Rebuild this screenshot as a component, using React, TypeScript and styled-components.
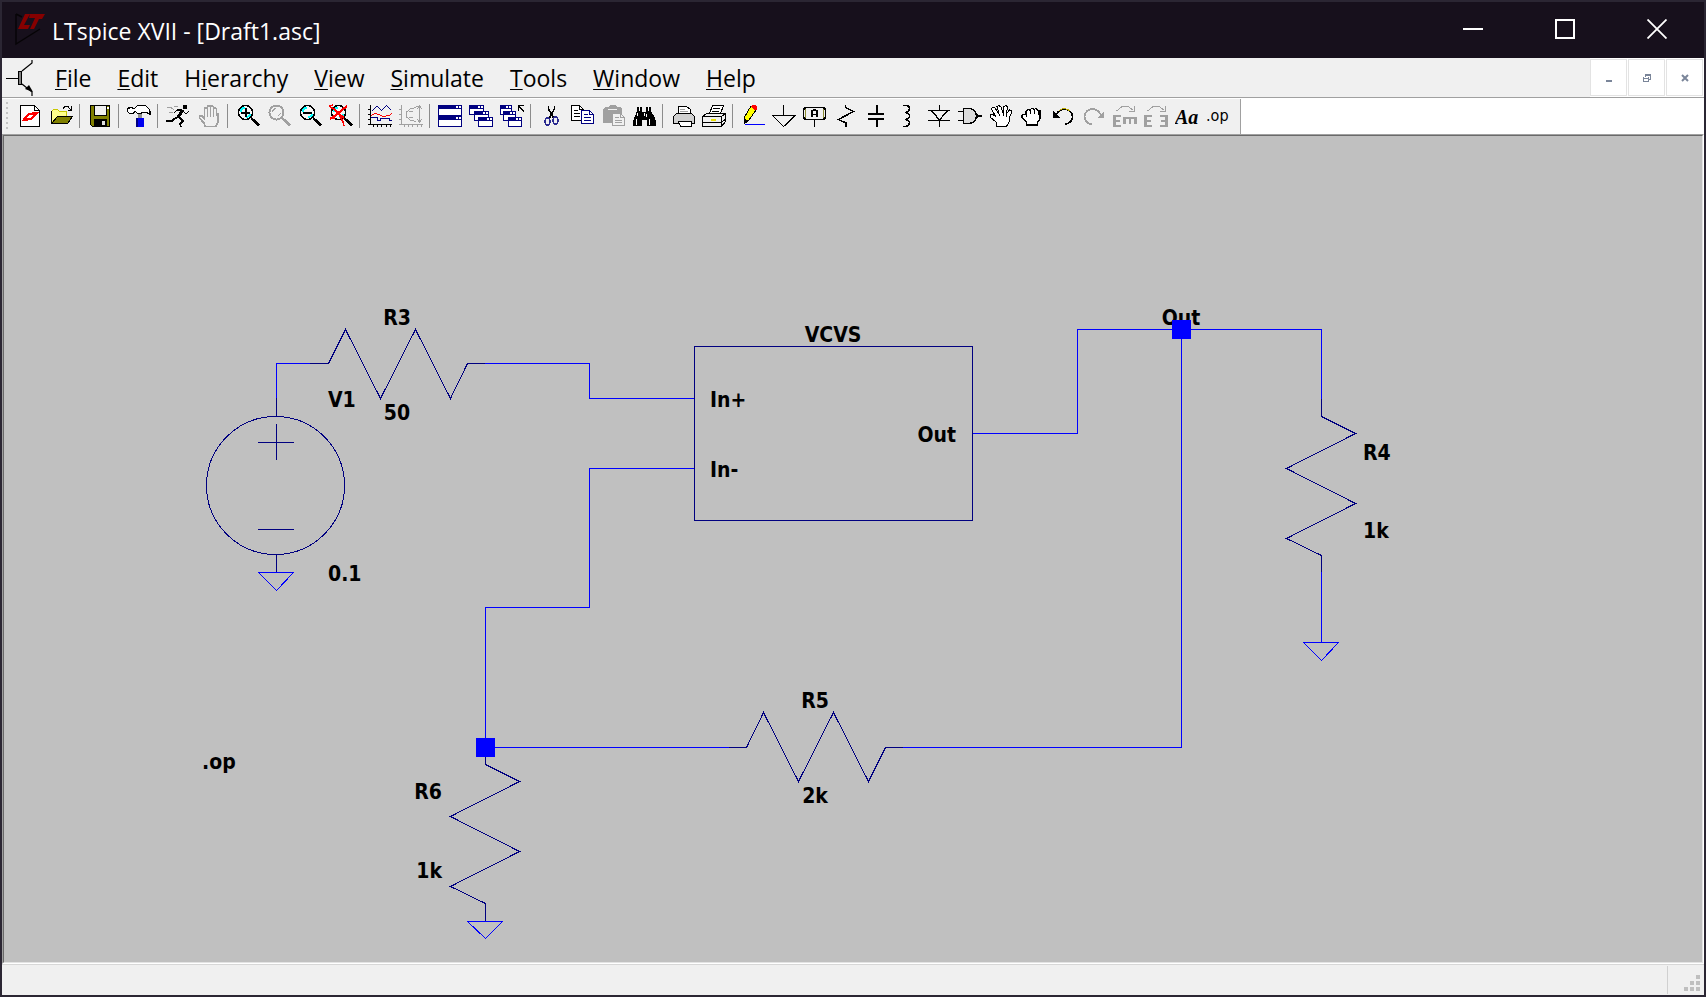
import React from "react";
import styled, { createGlobalStyle } from "styled-components";

const Global = createGlobalStyle`
  *, *::before, *::after { box-sizing: border-box; }
  body { margin: 0; background: #2b2633; }
  button { margin: 0; padding: 0; border: 0; background: transparent; color: inherit; font: inherit; }
  svg { display: block; }
`;

const Frame = styled.main`
  min-height: 100vh;
  display: flex;
  flex-direction: column;
  border: 2px solid #2b2633;
  background: #f0f0f0;
  font-family: "Open Sans", "Noto Sans", sans-serif;
  color: #000;
`;

const TitleBar = styled.header`
  display: flex;
  align-items: center;
  height: 56px;
  padding: 0 1px 2px 12px;
  background: #17101c;
  color: #fff;
`;

const TitleText = styled.h1`
  flex: 1;
  margin: 0 0 0 6px;
  font-size: 23px;
  line-height: 32px;
  font-weight: 400;
  padding-top: 3px;
`;

const CaptionButton = styled.button`
  width: 92px;
  height: 54px;
  display: grid;
  place-items: center;
`;

const MenuBar = styled.nav`
  display: flex;
  align-items: center;
  height: 39px;
  padding-left: 4px;
  background: #f0f0f0;
`;

const MenuList = styled.div`
  flex: 1;
  display: flex;
  align-items: center;
  padding-left: 6px;
`;

const MenuItem = styled.button`
  padding: 0 13px;
  font-size: 23px;
  line-height: 32px;
  u { text-decoration-thickness: 1px; text-underline-offset: 2px; text-decoration-skip-ink: none; }
`;

const ChildControls = styled.div`
  display: flex;
  align-self: stretch;
  gap: 1px;
  padding: 1px 1px 1px 0;
  background: #fff;
`;

const ChildButton = styled.button`
  width: 37px;
  height: 37px;
  display: grid;
  place-items: center;
  border: 1px solid #e3e3e3;
  background: #fff;
`;

const ToolRow = styled.div`
  display: flex;
  height: 37px;
  border-top: 1px solid #a0a0a0;
  background: #fff;
`;

const ToolBar = styled.div`
  display: flex;
  align-items: center;
  margin-top: 1px;
  padding: 0 7px 2px 4px;
  background: #f0f0f0;
  border-right: 1px solid #a0a0a0;
`;

const Grip = styled.div`
  width: 2px;
  height: 27px;
  margin-right: 6px;
  background: repeating-linear-gradient(to bottom, #c4c4c4 0 2px, transparent 2px 5px);
`;

const ToolButton = styled.button`
  width: 31px;
  height: 30px;
  display: grid;
  place-items: center;
`;

const Divider = styled.div`
  width: 8px;
  height: 24px;
  padding-left: 3px;
  &::before { content: ""; display: block; width: 1px; height: 24px; background: #8c8c8c; }
`;

const Sheet = styled.section`
  flex: 1;
  display: flex;
  border-style: solid;
  border-width: 1px;
  border-color: #a0a0a0 #fff #fff #a0a0a0;
`;

const SheetInner = styled.div`
  flex: 1;
  border-style: solid;
  border-width: 1px;
  border-color: #696969 #e3e3e3 #e3e3e3 #696969;
  background: #c0c0c0;
  overflow: hidden;
`;

const Schematic = styled.svg`
  width: 100%;
  height: 826px;
  fill: none;
  stroke-width: 1;
  shape-rendering: crispEdges;
`;

const Label = styled.text`
  font-family: "DejaVu Sans Condensed", "DejaVu Sans", sans-serif;
  font-weight: 700;
  font-size: 21px;
  fill: #000;
`;

const StatusBar = styled.footer`
  display: flex;
  justify-content: flex-end;
  height: 31px;
  border-top: 1px solid #d7d7d7;
  background: #f0f0f0;
`;

const SizeGrip = styled.div`
  width: 37px;
  margin: 1px 0;
  padding: 9px 0 0 16px;
  border-left: 1px solid #d0d0d0;
`;

const PixelSvg = styled.svg`
  shape-rendering: crispEdges;
`;

const K = "#000";
const G = "#a0a0a0";
const N = "#000080";

const Lens = ({ c = K, children }: { c?: string; children?: React.ReactNode }) => (
  <g fill="none">
    <circle cx="9.5" cy="8.5" r="7" fill={c === K ? "#f6f6f6" : "none"} stroke={c} strokeWidth={c === K ? 1.5 : 2} />
    {c === K ? (
      <path d="M4.5 8 Q5 4 9 3.5 M10 13.5 Q13 13 14.5 10" stroke="#0ff" strokeWidth="2" />
    ) : (
      <path d="M5.5 8 Q6 5 9 4.5 M11 12 Q13 11 13.5 9" stroke={c} />
    )}
    <path d="M15 14 L17 15.5" stroke={c} strokeWidth="2" />
    <path d="M17 15.5 L23 21.5" stroke={c} strokeWidth="3.4" />
    {children}
  </g>
);

const Win = ({ x, y, w, h }: { x: number; y: number; w: number; h: number }) => (
  <g>
    <rect x={x + 0.5} y={y + 0.5} width={w - 1} height={h - 1} fill="#fff" stroke={N} />
    <rect x={x} y={y} width={w} height="4" fill={N} />
    <rect x={x + w - 3} y={y + 1} width="2" height="2" fill="#fff" />
    <rect x={x + w - 6} y={y + 1} width="2" height="2" fill="#fff" />
  </g>
);

const BigE = () => <path d="M1.5 11 V23 M0 12 H8 M1 17 H7 M0 22 H8" stroke={G} strokeWidth="2.4" fill="none" />;
const TurnArrow = () => <path d="M3.5 7 L9 2.5 H15 L20 6 M21.5 2 V7.5 H16" stroke={G} fill="none" />;

const icons: Record<string, React.ReactNode> = {
  "New schematic": (
    <>
      <path d="M2.5 1.5 H16.5 L21.5 6.5 V22.5 H2.5 Z" fill="#fff" stroke={K} />
      <path d="M16.5 1.5 V6.5 H21.5" fill="none" stroke={K} />
      <path d="M4 17 L6 13 L11 9 H13 L9 14 H12 L10 17 Z M12 10 L14 8 H21 L18 12 L13 16 H11 L15 11 H12 Z" fill="#f00" />
    </>
  ),
  Open: (
    <>
      <path d="M2.5 18.5 V7.5 L4.5 5.5 H8.5 L10.5 7.5 H17.5 V12.5 H8.5 L2.5 18.5 Z" fill="#ffff8c" stroke="#c8c800" />
      <path d="M2.5 19.5 L8.5 12.5 H23.5 L18.5 19.5 Z" fill="#808000" stroke={K} />
      <path d="M2.5 7 V20 M14 4.5 Q16 1.5 19 2.5 L22 6 M22.5 2 V6.5 H18.5" fill="none" stroke={K} />
    </>
  ),
  Save: (
    <>
      <path d="M2.5 1.5 H21.5 V22.5 H4.5 L2.5 20.5 Z" fill="#808000" stroke={K} />
      <rect x="6.5" y="1.5" width="12" height="10" fill="#f0f0f0" stroke={K} />
      <rect x="6" y="15" width="13" height="7" fill={K} />
      <rect x="14" y="17" width="3" height="4" fill="#e0e0e0" />
      <rect x="19" y="3" width="2" height="2" fill="#fff" />
    </>
  ),
  "Control panel": (
    <>
      <rect x="11" y="8" width="4" height="6" fill="#909090" />
      <path d="M0.5 4.5 L3.5 3.5 L7.5 4.5 L10.5 1.5 H18.5 L22.5 5.5 L23.5 10.5 L19.5 8.5 H15.5 L13.5 9.5 H10.5 L8.5 7.5 L5.5 9.5 H2.5 L0.5 7.5 Z" fill="#fff" stroke={K} strokeWidth="1.3" />
      <path d="M9 14 H17 V23 H9 Z" fill="#0000f0" />
      <path d="M10 14 V23" stroke={N} strokeWidth="2" />
    </>
  ),
  Run: (
    <g fill="none" stroke={K}>
      <path d="M1 3.5 H5 L8 6 M3 8 L7 9 M8 2 L12 3" stroke={G} />
      <rect x="17" y="1" width="4" height="4" fill={K} stroke="none" />
      <path d="M17 6 L12 13" strokeWidth="3" />
      <path d="M16 6 L11 6 L8 9 M18 8 L20 10 L23 7" strokeWidth="1.3" />
      <path d="M12 13 L8 15 L6 17 L0 17 M13 13 L17 17 L14 20 L15 23" strokeWidth="1.6" />
    </g>
  ),
  Halt: (
    <path
      d="M8 22.5 L7 19 L2.5 14 V12 H5 L7.5 14.5 V4.5 L9 3.5 L10.5 4.5 V11 V2.5 L12 1.5 L13.5 2.5 V11 V2.5 L15 1.5 L16.5 3 V11 V5 L18 4 L19.5 5 V12 L21 9 V18 L19 22.5 Z M7.5 12 V16 M10.5 4 V13 M13.5 4 V13 M16.5 4 V13"
      fill="none"
      stroke={G}
      strokeWidth="1.7"
    />
  ),
  "Zoom in": (
    <Lens>
      <path d="M5 8.5 H14 M9.5 4 V13" stroke={K} strokeWidth="2" />
    </Lens>
  ),
  Pan: <Lens c={G} />,
  "Zoom out": (
    <Lens>
      <path d="M5 8.5 H14" stroke={K} strokeWidth="2" />
    </Lens>
  ),
  "Zoom full": (
    <Lens>
      <path d="M1 3 L5 5 L10 10 L15 14 M1 15 L7 11 L13 6 L18 2" stroke="#f00" strokeWidth="2.2" />
      <path d="M0 2 L4 1 M10 10 L14 18 L15 22 M1 14 H6" stroke="#f00" strokeWidth="1.5" />
    </Lens>
  ),
  "Autorange y-axis": (
    <g fill="none">
      <path d="M2.5 1 V20.5 H24 M0 5.5 H2 M0 10.5 H2 M0 15.5 H2 M0 20.5 H2 M5.5 20 V23 M9.5 20 V23 M13.5 20 V23 M18.5 20 V23 M22.5 20 V23" stroke={K} />
      <path d="M4 7 L9 2 L13.5 6.5 L18.5 1.5 L23.5 6.5" stroke={N} />
      <path d="M3 11.5 L7 9.5 L11 10.5 L15 12.5 L21 11.5 L24 9.5" stroke="#f00" />
      <path d="M3 13.5 H9.5 V16.5 H12.5 V14.5 H21.5 V16.5 H24" stroke={N} />
    </g>
  ),
  FFT: (
    <g fill="none" stroke={G}>
      <path d="M2.5 1 V20.5 H24 M0 5.5 H2 M0 10.5 H2 M0 15.5 H2 M0 20.5 H2 M5.5 20 V23 M9.5 20 V23 M13.5 20 V23 M18.5 20 V23 M22.5 20 V23" />
      <path d="M17 2.5 H21 M17 3.5 L11 5 L7 8.5 V12.5 L11 16 L17 17.5 M20.5 2 V18 M18 5 L20.5 2 L23 5 M18 15 L20.5 18 L23 15 M10 7.5 H14 M10 13.5 H14" />
    </g>
  ),
  "Tile windows": (
    <>
      <Win x={0} y={1} w={24} h={11} />
      <Win x={0} y={12} w={24} h={11} />
    </>
  ),
  Cascade: (
    <>
      <Win x={0} y={1} w={15} h={10} />
      <Win x={5} y={7} w={15} h={10} />
      <Win x={9} y={13} w={15} h={10} />
    </>
  ),
  "Close windows": (
    <>
      <Win x={0} y={1} w={12} h={10} />
      <Win x={3} y={7} w={13} h={10} />
      <Win x={8} y={13} w={14} h={10} />
      <path d="M18.5 7 V1.5 H24 M19 2 L24 8" stroke={K} strokeWidth="1.4" fill="none" />
    </>
  ),
  Cut: (
    <g fill="none">
      <path d="M9.5 2 V5 L12 9 L14.5 14 M15.5 2 V5 L13 9 L10.5 14" stroke={K} strokeWidth="1.6" />
      <ellipse cx="8.5" cy="17.5" rx="2.5" ry="3.5" stroke="#2a2a90" strokeWidth="1.5" />
      <ellipse cx="16.5" cy="16.5" rx="2.5" ry="3.5" stroke="#2a2a90" strokeWidth="1.5" />
    </g>
  ),
  Copy: (
    <>
      <path d="M1.5 1.5 H9.5 L13.5 5.5 V16.5 H1.5 Z" fill="#fff" stroke={K} />
      <path d="M9.5 1.5 V5.5 H13.5 M4 6.5 H8 M4 9.5 H10 M4 12.5 H10" fill="none" stroke={K} />
      <path d="M11.5 6.5 H19.5 L23.5 10.5 V19.5 H11.5 Z" fill="#fff" stroke={N} />
      <path d="M19.5 6.5 V10.5 H23.5 M14 10.5 H18 M14 13.5 H21 M14 16.5 H21" fill="none" stroke={N} />
    </>
  ),
  Paste: (
    <>
      <path d="M2 5 L4 3 H7 L9 1 H14 L16 3 H19 L21 5 V19 H2 Z" fill={G} />
      <path d="M7 5.5 H16" stroke="#f0f0f0" />
      <path d="M11.5 9.5 H19.5 L23.5 13.5 V21.5 H11.5 Z" fill="#f0f0f0" stroke={G} />
      <path d="M19.5 9.5 V13.5 H23.5 M14 13.5 H18 M14 16.5 H21 M14 18.5 H21" fill="none" stroke={G} />
    </>
  ),
  Find: (
    <>
      <path d="M5 3 H10 V8 H14 V3 H19 V7 L22 12 L24 17 V22 H15 V16 H10 V22 H1 V17 L3 12 L5 7 Z" fill={K} />
      <path d="M7 3 h1 v4 h-1z M16 3 h1 v4 h-1z M5 9 h1 v3 h-1z M4 15 h1 v6 h-1z M14 10 h1 v3 h-1z M17 15 h1 v6 h-1z M11.5 9 h1 v3 h-1z" fill="#fff" />
    </>
  ),
  "Print preview": (
    <>
      <path d="M7.5 9.5 V2.5 H15.5 L19.5 5.5 V9.5" fill="#fff" stroke={K} />
      <path d="M9 5.5 H14 M9 7.5 H17" stroke={G} />
      <path d="M5.5 9.5 H20.5 L23.5 12.5 V19.5 H2.5 V12.5 Z" fill="#d0d0d0" stroke={K} />
      <path d="M7.5 17.5 H20.5 V22.5 H9.5 Z" fill="#fff" stroke={K} />
    </>
  ),
  Print: (
    <>
      <path d="M7.5 9.5 L10.5 1.5 H21.5 L18.5 9.5" fill="#fff" stroke={K} />
      <path d="M11 4.5 H18 M10 7.5 H17" stroke={K} />
      <path d="M0.5 12.5 L4.5 9.5 H23.5 V17.5 L19.5 22.5 H0.5 Z" fill="#f0f0f0" stroke={K} />
      <path d="M0.5 12.5 H19.5 L23.5 9.5 M19.5 12.5 V22 M0.5 18.5 H19.5 L23.5 15" fill="none" stroke={K} />
      <path d="M9 15.5 H14" stroke="#e8e000" strokeWidth="2" />
    </>
  ),
  "Draw wire": (
    <>
      <path d="M10 2 L15 6 L8 16 L3.5 19.5 V13 Z" fill="#ff0" stroke={K} />
      <path d="M3 19 V14 L8 17 Z" fill={K} />
      <path d="M11 1 H14 L16 3 V6 L13 6 L10 3 Z" fill="#f00" />
      <path d="M4 20.5 H24" stroke="#00f" />
    </>
  ),
  Ground: <path d="M11.5 1 V11.5 M0.5 11.5 H23 L11.5 22.5 Z" fill="none" stroke={K} strokeWidth="1.4" />,
  "Label net": (
    <>
      <path d="M2.5 3.5 H20.5 L22.5 5.5 V13.5 L20.5 15.5 H2.5 L0.5 13.5 V5.5 Z M11.5 16 V23" fill="#f0f0f0" stroke={K} strokeWidth="1.6" />
      <path d="M2.5 5 V14 M20.5 5 V14" stroke="#8a8a30" />
      <path d="M9 13 V7 L10.5 6 H12.5 L14 7 V13 M9 10.5 H14" fill="none" stroke={K} strokeWidth="1.8" />
    </>
  ),
  Resistor: <path d="M11.5 1 V3.5 L19.5 7.5 L4.5 15.5 L12 19 V23" fill="none" stroke={K} strokeWidth="1.5" />,
  Capacitor: <path d="M3 10 H19 M3 15 H19 M11.5 1 V9 M11.5 16 V23" stroke={K} strokeWidth="2" />,
  Inductor: (
    <path d="M7 1.5 H10 Q14 2 13.5 5 Q13 8 9 8.5 Q13.5 9 13.5 12 Q13.5 15 9 15.5 Q13.5 16 13.5 19 Q13 22 10 22.5 H7" fill="none" stroke={K} strokeWidth="1.6" />
  ),
  Diode: <path d="M1 6.5 H23 M1 16.5 H23 M4.5 6.5 L12.5 16 L20.5 6.5 M12.5 1 V6 M12.5 17 V23" fill="none" stroke={K} strokeWidth="1.4" />,
  Component: (
    <>
      <path d="M5.5 4.5 H12 Q18 6 18.5 12 Q18 18 12 19.5 H5.5 Z" fill="#dcdcdc" stroke={K} strokeWidth="1.5" />
      <path d="M0 7.5 H5 M0 16.5 H5 M18 12 H24" stroke={K} strokeWidth="1.4" />
      <path d="M18 9 L22 12 L18 15 Z" fill={K} />
    </>
  ),
  Move: (
    <>
      <path
        d="M8 22.5 L7 18 L1 13 V10.5 H4 L7 13 L2.5 5 L4 3 L6 4 L10 10 L8 2.5 L10 1.5 L12 3 L14 9 L15 2.5 L17 1.5 L18.5 3 L17.5 10 L20.5 6 L22.5 7 V9 L20 14 V18 L17.5 22.5 Z"
        fill="#fff"
        stroke={K}
      />
      <path d="M10 10 L11 12 M14 9 V12 M17.5 10 L17 13" stroke={K} />
    </>
  ),
  Drag: (
    <>
      <path d="M7 21 L6 17 L2 14 V11 L4 10 L6 11 V7 L8 5.5 L10 6 L12 4 L14 5.5 L16 4.5 L18 6.5 L20 7 V15 L17.5 18 V21 Z" fill="#fff" stroke={K} strokeWidth="1.3" />
      <path d="M6.5 11 V13 M10 6 V10 M14 6 V10 M18 7 V11" stroke={K} />
    </>
  ),
  Undo: (
    <g fill="none">
      <path d="M5 11 Q8 5 14 5 Q21 6 21.5 13 Q21 19 14 20.5" stroke={K} strokeWidth="1.6" />
      <path d="M8 6.5 Q14 2.5 19 7" stroke="#b8a800" />
      <path d="M2 7 V14 H9 Z" fill={K} />
    </g>
  ),
  Redo: (
    <g fill="none">
      <path d="M19 11 Q16 5 10 5 Q3 6 2.5 13 Q3 19 10 20.5" stroke={G} strokeWidth="1.8" />
      <path d="M22 7 V14 H15 Z" fill={G} />
    </g>
  ),
  Rotate: (
    <>
      <TurnArrow />
      <BigE />
      <path d="M10 14 H24 M11.5 13 V20 M17 13 V20 M22.5 13 V20" stroke={G} strokeWidth="2.6" />
    </>
  ),
  Mirror: (
    <>
      <TurnArrow />
      <BigE />
      <g transform="translate(24 0) scale(-1 1)">
        <BigE />
      </g>
    </>
  ),
  Text: (
    <text x="0" y="20" fontFamily="Liberation Serif, serif" fontSize="20" fontWeight="700" fontStyle="italic">
      Aa
    </text>
  ),
  "SPICE directive": (
    <text x="0" y="17" fontFamily="DejaVu Sans Condensed, sans-serif" fontSize="16">
      .op
    </text>
  ),
};

const groups: string[][] = [
  ["New schematic", "Open"],
  ["Save"],
  ["Control panel"],
  ["Run", "Halt"],
  ["Zoom in", "Pan", "Zoom out", "Zoom full"],
  ["Autorange y-axis", "FFT"],
  ["Tile windows", "Cascade", "Close windows"],
  ["Cut", "Copy", "Paste", "Find"],
  ["Print preview", "Print"],
  ["Draw wire", "Ground", "Label net", "Resistor", "Capacitor", "Inductor", "Diode", "Component", "Move", "Drag", "Undo", "Redo", "Rotate", "Mirror", "Text", "SPICE directive"],
];

const smooth = ["Text", "SPICE directive"];

const menus: [string, string, string][] = [
  ["", "F", "ile"],
  ["", "E", "dit"],
  ["H", "i", "erarchy"],
  ["", "V", "iew"],
  ["", "S", "imulate"],
  ["", "T", "ools"],
  ["", "W", "indow"],
  ["", "H", "elp"],
];

const labels: { x: number; y: number; t: string; a?: "middle" | "end" }[] = [
  { x: 393, y: 189, t: "R3", a: "middle" },
  { x: 393, y: 284, t: "50", a: "middle" },
  { x: 324, y: 271, t: "V1" },
  { x: 324, y: 445, t: "0.1" },
  { x: 829, y: 206, t: "VCVS", a: "middle" },
  { x: 706, y: 271, t: "In+" },
  { x: 706, y: 341, t: "In-" },
  { x: 952, y: 306, t: "Out", a: "end" },
  { x: 1177, y: 189, t: "Out", a: "middle" },
  { x: 1359, y: 324, t: "R4" },
  { x: 1359, y: 402, t: "1k" },
  { x: 811, y: 572, t: "R5", a: "middle" },
  { x: 811, y: 667, t: "2k", a: "middle" },
  { x: 438, y: 663, t: "R6", a: "end" },
  { x: 438, y: 742, t: "1k", a: "end" },
  { x: 198, y: 633, t: ".op" },
];

export default function App() {
  return (
    <>
      <Global />
      <Frame>
        <TitleBar>
          <svg width="32" height="34" viewBox="0 0 32 34" aria-hidden="true">
            <path d="M2 2 V32 L26 17 M2 2 L8 5" fill="none" stroke="#060406" strokeWidth="1.4" />
            <path d="M11 2 H16 L10 13 H16 L14 17 H4 Z M16 2 H31 L28 7 H25 L20 17 H16 L21 6 H15 Z" fill="#860000" />
          </svg>
          <TitleText>LTspice XVII - [Draft1.asc]</TitleText>
          <CaptionButton aria-label="Minimize">
            <PixelSvg width="20" height="20"><path d="M0 10 H20" stroke="#fff" strokeWidth="2" /></PixelSvg>
          </CaptionButton>
          <CaptionButton aria-label="Maximize">
            <PixelSvg width="20" height="20"><rect x="1" y="1" width="18" height="18" fill="none" stroke="#fff" strokeWidth="2" /></PixelSvg>
          </CaptionButton>
          <CaptionButton aria-label="Close">
            <svg width="20" height="20"><path d="M0.5 0.5 L19.5 19.5 M19.5 0.5 L0.5 19.5" stroke="#fff" strokeWidth="1.8" /></svg>
          </CaptionButton>
        </TitleBar>

        <MenuBar aria-label="Main menu">
          <svg width="30" height="36" viewBox="0 0 30 36" aria-hidden="true">
            <path d="M0 18.5 H12 M16 11 L26 3 V0 M16 24 L26 32 V36" fill="none" stroke="#000" strokeWidth="1.2" />
            <path d="M27 32 L19 29 L23 25 Z" fill="#000" />
            <rect x="12.5" y="11.5" width="3" height="13" fill="#808080" stroke="#000" />
          </svg>
          <MenuList>
            {menus.map(([a, u, b]) => (
              <MenuItem key={a + u + b}>{a}<u>{u}</u>{b}</MenuItem>
            ))}
          </MenuList>
          <ChildControls>
            <ChildButton aria-label="Minimize document">
              <PixelSvg width="8" height="8"><rect x="1" y="6" width="6" height="2" fill="#7a8599" /></PixelSvg>
            </ChildButton>
            <ChildButton aria-label="Restore document">
              <PixelSvg width="8" height="8">
                <path d="M2.5 3 V0.5 H7.5 V5 H6 M2 1 H8 M0 4 H6 M0.5 3 V7.5 H5.5 V3" fill="none" stroke="#7a8599" />
              </PixelSvg>
            </ChildButton>
            <ChildButton aria-label="Close document">
              <svg width="8" height="8"><path d="M1 1 L7 7 M7 1 L1 7" stroke="#7a8599" strokeWidth="2" /></svg>
            </ChildButton>
          </ChildControls>
        </MenuBar>

        <ToolRow>
          <ToolBar role="toolbar" aria-label="Schematic tools">
            <Grip />
            {groups.map((g, i) => (
              <React.Fragment key={i}>
                {i > 0 && <Divider />}
                {g.map((name) => (
                  <ToolButton key={name} aria-label={name}>
                    {smooth.includes(name) ? (
                      <svg width="24" height="24">{icons[name]}</svg>
                    ) : (
                      <PixelSvg width="24" height="24">{icons[name]}</PixelSvg>
                    )}
                  </ToolButton>
                ))}
              </React.Fragment>
            ))}
          </ToolBar>
        </ToolRow>

        <Sheet>
          <SheetInner>
            <Schematic role="img" aria-label="Schematic Draft1.asc">
              <g stroke="#0000ff">
                <path d="M272.5 262 V227.5 H306 M481 227.5 H585.5 V262.5 H690" />
                <path d="M690 332.5 H585.5 V471.5 H481.5 V611.5 H725" />
                <path d="M969 297.5 H1073.5 V193.5 H1317.5 V263 M1317.5 436 V506" />
                <path d="M1177.5 193 V611.5 H899" />
                <path d="M254.5 436.5 H289.5 L272.5 454.5 Z" />
                <path d="M1299.5 506.5 H1334.5 L1317.5 524.5 Z" />
                <path d="M463.5 785.5 H498.5 L481.5 802.5 Z" />
              </g>
              <g stroke="#000080">
                <path d="M306 227.5 H324.5 L341.5 193.5 L376.5 262.5 L411.5 193.5 L446.5 262.5 L463.5 227.5 H481" />
                <path d="M725 611.5 H742.5 L759.5 576.5 L794.5 645.5 L829.5 576.5 L864.5 645.5 L881.5 611.5 H899" />
                <path d="M1317.5 263 V280.5 L1351.5 297.5 L1282.5 332.5 L1351.5 367.5 L1282.5 402.5 L1317.5 419.5 V436" />
                <path d="M481.5 611 V628.5 L515.5 645.5 L446.5 680.5 L515.5 715.5 L446.5 750.5 L481.5 767.5 V785" />
                <circle cx="271.5" cy="349.5" r="69" />
                <path d="M272.5 262 V281 M272.5 418 V436 M254 306.5 H290 M272.5 288 V324 M254 393.5 H290" />
                <rect x="690.5" y="210.5" width="278" height="174" />
              </g>
              {labels.map((l) => (
                <Label key={`${l.x}-${l.y}`} x={l.x} y={l.y} textAnchor={l.a}>{l.t}</Label>
              ))}
              <rect x="1168" y="184" width="19" height="19" fill="#0000ff" />
              <rect x="472" y="602" width="19" height="19" fill="#0000ff" />
            </Schematic>
          </SheetInner>
        </Sheet>

        <StatusBar>
          <SizeGrip>
            <PixelSvg width="16" height="16" aria-hidden="true">
              <path d="M12 0h4v4h-4z M6 6h4v4h-4z M12 6h4v4h-4z M0 12h4v4h-4z M6 12h4v4h-4z M12 12h4v4h-4z" fill="#bfbfbf" />
            </PixelSvg>
          </SizeGrip>
        </StatusBar>
      </Frame>
    </>
  );
}
